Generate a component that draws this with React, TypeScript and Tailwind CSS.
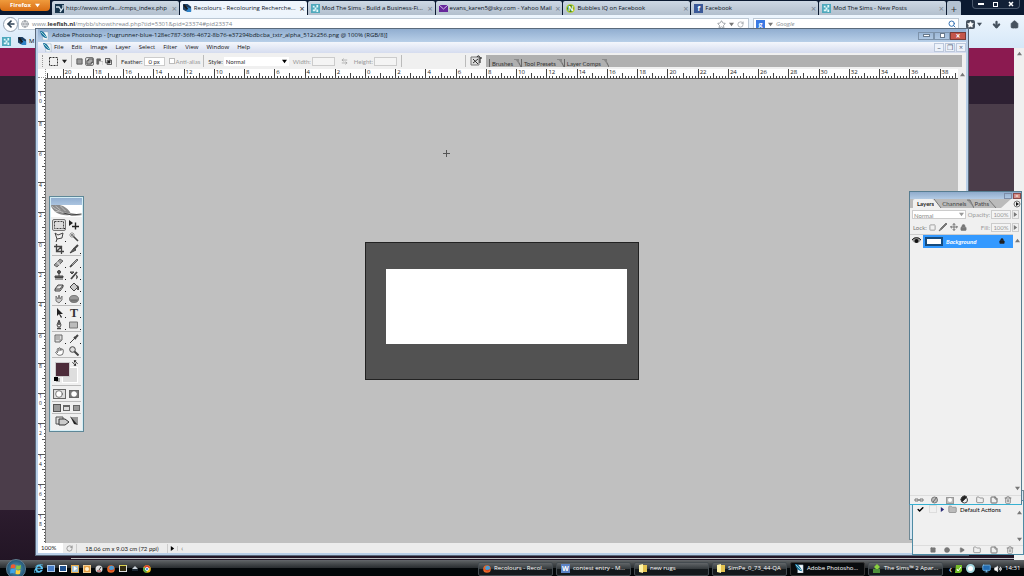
import type { ReactNode } from "react";
import {
  ArrowDown,
  ArrowLeft,
  ArrowLeftRight,
  Check,
  Circle,
  Folder,
  Globe,
  Hand,
  Home,
  Lock,
  Monitor,
  Move,
  Play,
  RotateCw,
  Search,
  Square,
  Star,
  StickyNote,
  Trash2,
  Volume2,
} from "lucide-react";
import { FaInternetExplorer } from "react-icons/fa";

const UNIT = 15.12;

function Leaf() {
  return (
    <svg viewBox="0 0 10 10" className="size-[9px] shrink-0">
      <path d="M3 1h6v9H3z" fill="#f4f8fa" stroke="#8aa0b0" strokeWidth="0.5" />
      <path d="M0 0c4 0 6 3 8 8C4 8 1 5 0 0z" fill="#1a6f9e" />
      <path d="M1 1l6 6" stroke="#a5e0cf" />
    </svg>
  );
}

function LeefishIcon() {
  return (
    <svg viewBox="0 0 10 10" className="size-[9px] shrink-0">
      <path d="M0 0h5l4 3v5H3L0 6z" fill="#1d3f63" />
      <path d="M4 3l5 2v4H4z" fill="#2f83c8" />
      <path d="M1 1l4 5" stroke="#1b1b1b" strokeWidth="2" />
    </svg>
  );
}

function SimsIcon() {
  return (
    <svg viewBox="0 0 10 10" className="size-[9px] shrink-0">
      <path d="M0 0h10v10H0z" fill="#4fa9bd" />
      <path d="M2 2h2v2H2zM6 1h2v3H6zM2 6h3v2H2zM6 6h2v3H6zM4 4h2v2H4z" fill="#e2f8fa" />
    </svg>
  );
}

function MailIcon() {
  return (
    <svg viewBox="0 0 9 7" className="h-[7px] w-[9px] shrink-0">
      <path d="M0 0h9v7H0z" fill="#67279b" />
      <path d="M0 0l4.500 4L9 0" fill="none" stroke="#d7bbea" />
    </svg>
  );
}

function SimfansIcon() {
  return (
    <svg viewBox="0 0 9 9" className="size-[9px] shrink-0">
      <path d="M0 0h9v9H0z" fill="#17344c" />
      <path d="M1 3h3l2 3M8 1v3L5 8" fill="none" stroke="#d3e3ee" strokeWidth="1.3" />
    </svg>
  );
}

function LetterIcon({ letter, className }: { letter: string; className: string }) {
  return <span className={`flex size-[9px] shrink-0 items-center justify-center text-[7px] font-bold leading-none text-white ${className}`}>{letter}</span>;
}

function FolderIcon() {
  return (
    <svg viewBox="0 0 8 9" className="h-[9px] w-2 shrink-0">
      <path d="M0 1l4-1v9l-4-1z" fill="#fff3a6" />
      <path d="M4 1h4v7H4z" fill="#e3c24f" />
    </svg>
  );
}

function FirefoxIcon() {
  return (
    <svg viewBox="0 0 10 10" className="size-2 shrink-0">
      <circle cx="5" cy="5" r="4.800" fill="#e8692a" />
      <circle cx="5.800" cy="4" r="3" fill="#4b9bd3" />
      <path d="M1 2c1 5 4 5 8 3-1 4-7 5-8-3z" fill="#d9461d" />
    </svg>
  );
}

function ChromeIcon() {
  return (
    <svg viewBox="0 0 10 10" className="size-2 shrink-0">
      <circle cx="5" cy="5" r="4.800" fill="#f2c31b" />
      <path d="M5 5L1 2.300A4.800 4.800 0 0 1 9.300 3z" fill="#dc3f30" />
      <path d="M5 5L.8 2.700A4.800 4.800 0 0 0 4.500 9.800z" fill="#4ba648" />
      <circle cx="5" cy="5" r="2" fill="#4a87dc" stroke="white" />
    </svg>
  );
}

function Arrow({ dir, className }: { dir: "up" | "down" | "right"; className?: string }) {
  const d = { up: "M0 5h6L3 1z", down: "M0 1h6L3 5z", right: "M1 0v6l4-3z" }[dir];
  return <svg viewBox="0 0 6 6" className={`size-[5px] shrink-0 ${className ?? "text-[#777]"}`}><path d={d} fill="currentColor" /></svg>;
}

const tabs = [
  { title: "http://www.simfa.../cmps_index.php", icon: <SimfansIcon /> },
  { title: "Recolours - Recolouring Recherche...", icon: <LeefishIcon />, active: true },
  { title: "Mod The Sims - Build a Business-Fi...", icon: <SimsIcon /> },
  { title: "evans_karen5@sky.com - Yahoo Mail", icon: <MailIcon /> },
  { title: "Bubbles IQ on Facebook", icon: <LetterIcon letter="N" className="rounded-full border border-[#c7e04a] bg-[#4b8a14]" /> },
  { title: "Facebook", icon: <LetterIcon letter="f" className="bg-[#3b5998]" /> },
  { title: "Mod The Sims - New Posts", icon: <SimsIcon /> },
];

function Browser() {
  return (
    <div className="flex min-h-0 flex-1 flex-col">
      {/* Tab strip */}
      <div className="flex h-[15px] items-end bg-[#0b1a31]">
        <button className="mr-[2px] flex h-[11px] w-[50px] shrink-0 items-center justify-center gap-1 self-start rounded-b-sm bg-linear-to-b from-[#ef9b3c] to-[#d96d10] text-[6px] font-bold text-white">
          Firefox <Arrow dir="down" className="text-white" />
        </button>
        <div className="flex min-w-0 flex-1">
          {tabs.map((t) => (
            <div
              key={t.title}
              className={`mr-px flex h-[14px] min-w-0 flex-1 items-center gap-[2px] rounded-t-xs pl-[3px] pr-[2px] text-[6px] font-medium text-[#0b121c] ${t.active ? "bg-[#eef5fc]" : "bg-linear-to-b from-[#cdd8e4] to-[#b2bfcd]"}`}
            >
              {t.icon}
              <span className="whitespace-nowrap">{t.title}</span>
              <button className={`ml-auto text-[9px] leading-none ${t.active ? "text-[#333]" : "text-[#76828f]"}`}>×</button>
            </div>
          ))}
        </div>
        <button className="flex h-[14px] w-[14px] shrink-0 items-center justify-center rounded-t-xs bg-[#b4c2d1] text-[11px] leading-none text-[#333]">+</button>
        <div className="ml-[11px] mr-1 flex h-[9px] w-[48px] shrink-0 items-center justify-around self-start rounded-b-sm border border-t-0 border-[#4a586c] bg-[#122036] text-white">
          <button className="h-[2px] w-[6px] bg-white" aria-label="Minimise" />
          <button className="size-[5px] border border-white" aria-label="Restore" />
          <button aria-label="Close"><svg viewBox="0 0 6 6" className="size-[6px]"><path d="M1 1l4 4M5 1L1 5" stroke="white" strokeWidth="1.500" /></svg></button>
        </div>
      </div>
      {/* Navigation */}
      <div className="h-[33px] bg-linear-to-b from-[#edf5fd] to-[#d6e8f8]">
        <div className="flex h-[18px] items-center">
          <button className="ml-[3px] flex size-[15px] shrink-0 items-center justify-center rounded-full border border-[#93a1b0] bg-white" aria-label="Back">
            <ArrowLeft className="size-[10px] text-[#2f4254]" strokeWidth={4} />
          </button>
          <div className="flex h-3 flex-1 items-center gap-[3px] border border-[#bcc8d4] bg-white pl-[2px] text-[6px] text-[#80878e]">
            <Globe className="size-2" />
            <span className="flex-1">
              www.<b className="text-[#333]">leefish.nl</b>/mybb/showthread.php?tid=5301&amp;pid=23374#pid23374
            </span>
            <Star className="size-[9px]" />
            <Arrow dir="down" />
            <RotateCw className="mr-1 size-[7px]" />
          </div>
          <div className="ml-1 flex h-3 w-[206px] items-center gap-[3px] border border-[#bcc8d4] bg-white px-[2px] text-[6px] italic text-[#80878e]">
            <LetterIcon letter="g" className="bg-[#3a79e3] not-italic" />
            <Arrow dir="down" />
            <span className="flex-1">Google</span>
            <Search className="size-2 text-[#3774b5]" strokeWidth={3} />
          </div>
          <div className="flex w-[65px] shrink-0 items-center justify-between pl-[7px] pr-[5px] text-[#46525f]">
            <button className="flex items-center gap-[2px]" aria-label="Bookmarks">
              <Star className="size-[9px] rounded-xs bg-[#46525f] p-px text-white" fill="white" />
              <Arrow dir="down" className="text-[#46525f]" />
            </button>
            <ArrowDown className="size-[9px]" strokeWidth={6} />
            <Home className="size-[9px]" fill="currentColor" />
          </div>
        </div>
        <div className="flex h-4 items-center gap-[7px] pl-[2px] text-[6px]">
          <SimsIcon />
          <span className="flex items-center gap-[2px]"><LeefishIcon />M</span>
        </div>
      </div>
      {/* Page */}
      <div className="flex min-h-0 flex-1">
        <div className="flex flex-1 flex-col">
          <div className="h-[28px] bg-[#8b1a50]" />
          <div className="h-[28px] bg-[#2d2032]" />
          <div className="flex-1 bg-[#4b3d4a]" />
          <div className="flex h-[50px] flex-col justify-end bg-linear-to-b from-[#2c1c2e] to-[#221525] pb-px pl-[71px]">
            <div className="h-px bg-[#b9bdc0]" />
          </div>
        </div>
        <div className="flex w-[10px] flex-col items-center bg-[#f0f0f0] pt-[3px]"><Arrow dir="up" /></div>
      </div>
    </div>
  );
}

function HorizontalRuler() {
  const start = 319;
  const ticks = Array.from({ length: 302 }, (_, i) => i - 106);
  return (
    <svg className="h-[9px] w-full bg-white" fontSize="6" fill="#222">
      {ticks.map((i) => {
        const x = start + (i * UNIT) / 5;
        const major = i % 10 === 0;
        return (
          <g key={i}>
            <path d={`M${Math.round(x) + 0.5} ${major ? 0 : i % 5 === 0 ? 4 : 7}V9`} stroke="#444" />
            {major && <text x={x + 2} y="5">{Math.abs(i / 5)}</text>}
          </g>
        );
      })}
    </svg>
  );
}

function VerticalRuler() {
  const start = 164;
  const ticks = Array.from({ length: 154 }, (_, i) => i - 54);
  return (
    <svg className="h-full w-2 shrink-0 bg-white" fontSize="5" fill="#222">
      {ticks.map((i) => {
        const y = start + (i * UNIT) / 5;
        const major = i % 10 === 0;
        return (
          <g key={i}>
            <path d={`M${major ? 0 : i % 5 === 0 ? 4 : 6} ${Math.round(y) + 0.5}H8`} stroke="#555" />
            {major &&
              String(Math.abs(i / 5)).split("").map((d, n) => (
                <text key={n} x="1" y={y + 5 + n * 7}>{d}</text>
              ))}
          </g>
        );
      })}
      <path d="M7.500 0V2000" stroke="#777" />
    </svg>
  );
}

function Field({ label, value, muted, className }: { label: string; value: string; muted?: boolean; className: string }) {
  return (
    <label className={`flex shrink-0 items-center gap-px ${muted ? "text-[#999]" : "text-[#333]"}`}>
      {label}
      <input defaultValue={value} disabled={muted} className={`h-[9px] border border-[#ccc] text-center ${muted ? "bg-[#f4f4f4]" : "bg-white"} ${className}`} />
    </label>
  );
}

function SelectionMode({ mode }: { mode: "new" | "add" | "subtract" | "intersect" }) {
  return (
    <svg viewBox="0 0 8 8" className="size-[7px]">
      {mode === "new" && <path d="M1 1h6v6H1z" fill="#999" stroke="#555" />}
      {mode === "add" && <path d="M1 3h2V1h5v4H6v2H1z" fill="#aaa" stroke="#444" />}
      {mode === "subtract" && <path d="M1 7V1h4v2H3v4z" fill="#666" stroke="#666" />}
      {mode === "subtract" && <path d="M4 4h4v4" fill="none" stroke="#bbb" />}
      {mode === "intersect" && <path d="M.5.5h5v5h-5zM2.500 2.500h5v5h-5z" fill="none" stroke="#444" />}
      {mode === "intersect" && <path d="M3 3h3v3H3z" fill="#222" />}
    </svg>
  );
}

const menus = ["File", "Edit", "Image", "Layer", "Select", "Filter", "View", "Window", "Help"];
const paletteTabs = ["Brushes", "Tool Presets", "Layer Comps"];

function Photoshop() {
  return (
    <div className="absolute bottom-5 left-[35px] right-[55px] top-[28px] flex flex-col border border-[#5a6a7c] bg-[#b9cfe8] px-[2px] pb-[2px]">
      {/* Title bar */}
      <div className="flex h-[13px] items-center gap-[3px] bg-linear-to-b from-[#91aed0] to-[#b8cfe8] pl-[2px] text-[6px] font-medium text-[#101a26]">
        <Leaf />
        <span className="flex-1 whitespace-nowrap">
          Adobe Photoshop - [rugrunner-blue-128ec787-36f6-4672-8b76-e37294bdbcba_txtr_alpha_512x256.png @ 100% (RGB/8)]
        </span>
        <div className="flex">
          <button className="flex h-[8px] w-[16px] items-center justify-center border border-[#7d93ab]" aria-label="Minimise"><i className="h-[3px] w-[7px] border border-[#68798c] bg-white" /></button>
          <button className="flex h-[8px] w-[16px] items-center justify-center border border-[#7d93ab]" aria-label="Maximise"><i className="size-[5px] border border-[#68798c] bg-white" /></button>
          <button className="flex h-[8px] w-[16px] items-center justify-center border border-[#7a3a35] bg-[#c4564a] text-[8px] font-bold leading-none text-white">×</button>
        </div>
      </div>
      {/* Menu bar */}
      <div className="flex h-[11px] items-center bg-linear-to-b from-[#f4f7fc] to-[#d5dcef] pl-[5px] text-[6px] font-medium text-[#111]">
        <Leaf />
        <div className="flex flex-1 gap-2 pl-[2px]">
          {menus.map((m) => <button key={m}>{m}</button>)}
        </div>
        <div className="flex gap-px text-[#52647a]">
          {["–", "❐", "×"].map((s) => <button key={s} className="flex h-[9px] w-[10px] items-center justify-center border border-[#bcc8dc] bg-[#edf2fa] text-[7px] leading-none">{s}</button>)}
        </div>
      </div>
      {/* Options bar */}
      <div className="flex h-4 items-center bg-[#f0f0f0] pl-1 font-['Lato','Open_Sans',sans-serif] text-[6px]">
        <div className="h-3 w-[7px] border-l border-dotted border-[#999]" />
        <svg viewBox="0 0 9 9" className="size-[9px]"><path d="M.5.5h8v8h-8z" fill="none" stroke="#333" strokeDasharray="2 1" /></svg>
        <Arrow dir="down" className="mx-1 text-[#222]" />
        <div className="flex h-3 items-center gap-[2px] border-l border-[#bbb] pl-1">
          <SelectionMode mode="new" />
          <span className="flex size-[9px] items-center justify-center rounded-xs border border-[#777] bg-[#ddd]"><SelectionMode mode="add" /></span>
          <SelectionMode mode="subtract" />
          <SelectionMode mode="intersect" />
        </div>
        <div className="ml-1 flex h-3 items-center gap-1 border-l border-[#bbb] pl-1">
          <Field label="Feather:" value="0 px" className="w-[21px]" />
          <label className="flex items-center gap-px text-[#999]"><input type="checkbox" disabled className="size-[6px] appearance-none border border-[#bbb] bg-white" />Anti-alias</label>
        </div>
        <div className="ml-[3px] flex h-3 items-center gap-1 border-l border-[#bbb] pl-1 text-[#333]">
          <label className="relative flex items-center gap-px">
            Style:
            <select className="h-[9px] w-[65px] appearance-none bg-white pl-[2px]"><option>Normal</option></select>
            <Arrow dir="down" className="pointer-events-none absolute right-[2px] text-black" />
          </label>
          <Field label="Width:" value="" muted className="w-[23px]" />
          <ArrowLeftRight className="mx-[2px] size-[7px] text-[#888]" />
          <Field label="Height:" value="" muted className="w-[23px]" />
        </div>
        <div className="ml-1 h-3 w-[65px] border-x border-[#bbb]" />
        <button className="mx-1 flex size-3 items-center justify-center" aria-label="File browser">
          <svg viewBox="0 0 12 12" className="size-3">
            <path d="M1 2h8v8H1z" fill="#ddd" stroke="#777" />
            <path d="M3 4l5 5M3 8l5-4" stroke="#333" />
            <path d="M7 2c1-2 3-1 3 1h2M10 3v5" fill="none" stroke="#111" />
          </svg>
        </button>
        <div className="mr-1 flex h-[12px] flex-1 items-end bg-[#b0b0b0] pl-[3px]">
          {paletteTabs.map((t) => (
            <button key={t} className="flex h-2 items-center border-l border-[#666] pl-[2px] text-[#333]">
              {t}
              <svg viewBox="0 0 8 8" className="size-2"><path d="M1 0h3l4 8" fill="none" stroke="#666" /><path d="M2 0h4v5z" fill="#888" /></svg>
            </button>
          ))}
        </div>
      </div>
      {/* Document */}
      <div className="flex min-h-0 flex-1 bg-[#f0f0f0]">
        <div className="flex min-w-0 flex-1 flex-col">
          <div className="flex h-[9px] bg-white"><div className="w-2 shrink-0 border-b border-r border-dotted border-[#999]" /><HorizontalRuler /></div>
          <div className="flex min-h-0 flex-1">
            <VerticalRuler />
            <div className="relative flex flex-1 items-center justify-center border-t border-[#555] bg-[#c0c0c0]">
              <svg viewBox="0 0 7 7" className="absolute left-[397px] top-[71px] size-[7px]"><path d="M3.500 0v7M0 3.500h7" stroke="#555" /></svg>
              <div className="h-[138px] w-[274px] border border-[#222] bg-[#525252] pl-5 pt-[26px]">
                <div className="h-[75px] w-[241px] bg-white" />
              </div>
            </div>
          </div>
        </div>
        <div className="flex w-2 flex-col items-center bg-[#f0f0f0] pt-[3px]"><Arrow dir="up" /></div>
      </div>
      {/* Status bar */}
      <div className="flex h-[10px] items-center bg-[#ececec] font-['Lato','Open_Sans',sans-serif] text-[6px] text-[#222]">
        <div className="h-full w-[25px] bg-white pl-[3px] leading-[10px]">100%</div>
        <RotateCw className="mx-[3px] size-[7px] text-[#666]" />
        <span className="w-[92px] border-x border-[#ccc] text-center">18.06 cm x 9.03 cm (72 ppi)</span>
        <span className="border-r border-[#ccc] px-[2px]"><Arrow dir="right" className="text-black" /></span>
        <span className="pl-[3px] text-[8px] text-[#777]">‹</span>
      </div>
    </div>
  );
}

function Tool({ children }: { children: ReactNode }) {
  return <svg viewBox="0 0 10 10" className="size-[10px]" fill="none" stroke="#444">{children}</svg>;
}

const toolGroups: { name: string; icon: ReactNode }[][] = [
  [
    { name: "Marquee", icon: <Tool><path d="M.5 1.500h9v7h-9z" strokeDasharray="2 1" /></Tool> },
    { name: "Move", icon: <Tool><path d="M0 0v6l4-3z" fill="#222" stroke="none" /><path d="M6.500 2.500v7M3 6.500h7" stroke="#222" strokeWidth="1.400" /></Tool> },
    { name: "Lasso", icon: <Tool><path d="M1 1l3 2 5-2-1 5-5 1zM3 7l-1 3" /></Tool> },
    { name: "Magic wand", icon: <Tool><path d="M4 4l5 5" strokeWidth="1.600" /><path d="M3 0v6M0 3h6M1 1l4 4M5 1L1 5" stroke="#777" strokeWidth="0.700" /></Tool> },
    { name: "Crop", icon: <Tool><path d="M2.500 0v7.500H10M0 2.500h7.500V10M8 2L3 7" strokeWidth="1.300" /></Tool> },
    { name: "Slice", icon: <Tool><path d="M1 9l4-5 2 2z" fill="#666" /><path d="M5 5l4-4" strokeWidth="2" /></Tool> },
  ],
  [
    { name: "Healing brush", icon: <Tool><path d="M0 7l6-6 3 2-6 6z" fill="#999" stroke="#666" /><path d="M3 4l3 3" strokeWidth="2" stroke="#ccc" /></Tool> },
    { name: "Brush", icon: <Tool><path d="M1 9l2-3 5-5 1 1-5 5z" fill="#aaa" stroke="#666" /><path d="M1 9l2-2" strokeWidth="1.500" /></Tool> },
    { name: "Clone stamp", icon: <Tool><circle cx="5" cy="2" r="1.500" fill="#555" /><path d="M5 3v3M1 6h8v1.500H1z" fill="#666" /><path d="M1 9h8" /></Tool> },
    { name: "History brush", icon: <Tool><path d="M2 9l6-7" strokeWidth="1.800" /><path d="M1 2h4L3 4zM7 5c2 1 2 3 0 4" fill="#777" /></Tool> },
    { name: "Eraser", icon: <Tool><path d="M1 7l3-4h5L6 7zM1 7v2h5l3-4V3" fill="#ccc" /></Tool> },
    { name: "Paint bucket", icon: <Tool><path d="M1 5l4-4 4 4-4 4z" fill="#ccc" /><path d="M8 4c2 1 1 3 1 4" strokeWidth="1.800" /></Tool> },
    { name: "Smudge", icon: <Tool><path d="M2 2l2 3 1-4 1 4 2-3v4L5 9 2 7z" fill="#ccc" stroke="#777" /></Tool> },
    { name: "Sponge", icon: <Tool><ellipse cx="5" cy="5" rx="4.500" ry="3.500" fill="#999" stroke="#777" /><path d="M1 6h8M2 7h6" stroke="#555" strokeWidth="0.700" /></Tool> },
  ],
  [
    { name: "Path selection", icon: <Tool><path d="M3 0v8l2-2 2 4 1-1-2-3h3z" fill="#222" stroke="none" /></Tool> },
    { name: "Type", icon: <span className="font-['Liberation_Serif',serif] text-[12px] font-bold leading-[10px] text-[#333]">T</span> },
    { name: "Pen", icon: <Tool><path d="M5 0L3 5l1 2h2l1-2z" fill="#eee" /><path d="M5 1v4M3 8.500h4" strokeWidth="1.600" /></Tool> },
    { name: "Rectangle", icon: <Tool><path d="M.5 2h8v6h-8z" fill="#bbb" stroke="#777" /></Tool> },
  ],
  [
    { name: "Notes", icon: <Tool><path d="M1 1h7v5L6 8H1z" fill="#ddd" stroke="#666" /><path d="M6 8V6h2M2 3h4M2 5h4" stroke="#888" /></Tool> },
    { name: "Eyedropper", icon: <Tool><path d="M1 9l5-5" /><path d="M5 3l2 2M6 4l3-3" strokeWidth="2" /></Tool> },
    { name: "Hand", icon: <Hand className="size-[9px]" fill="white" /> },
    { name: "Zoom", icon: <Tool><circle cx="3.500" cy="3.500" r="2.800" fill="#ddd" /><path d="M5.500 5.500l4 4" strokeWidth="2" /></Tool> },
  ],
];
const singleTools = ["Move", "Magic wand", "Crop", "Hand", "Zoom"];

function Toolbox() {
  return (
    <div className="absolute left-[49px] top-[196px] w-[35px] border border-[#5e8797] bg-[#f0f0f0] text-[#444] outline-1 -outline-offset-2 outline-[#d3edf5]">
      <div className="h-2 bg-linear-to-b from-[#8eabcd] to-[#aac4e0]" />
      <svg viewBox="0 0 32 12" className="h-3 w-full bg-white">
        <path d="M0 0h9c5 1 9 4 11 8 4 1 8 1 12 2-5 1-9 1-13 0C10 11 3 8 0 0z" fill="#8a8a8a" />
        <path d="M1 1c5 4 10 7 19 8M5 1l5 4M10 1l5 5M4 7l5-1" stroke="#ddd" fill="none" strokeWidth="0.600" />
        <path d="M13 8l8 2 10-1" stroke="#444" fill="none" />
      </svg>
      <div className="px-[2px] pb-[3px] pt-[2px]">
        {toolGroups.map((group, g) => (
          <div key={g} className="mb-px grid grid-cols-2 gap-x-px border-b border-[#bbb]">
            {group.map((tool) => (
              <button key={tool.name} aria-label={tool.name} className={`relative flex h-[12px] items-center justify-center ${tool.name === "Marquee" ? "rounded-xs border border-[#777] bg-[#ddd]" : ""}`}>
                {tool.icon}
                {!singleTools.includes(tool.name) && <i className="absolute bottom-px right-0 size-px bg-[#222]" />}
              </button>
            ))}
          </div>
        ))}
        {/* Foreground and background colours */}
        <div className="relative h-[27px] border-b border-[#bbb]">
          <div className="absolute left-[10px] top-2 size-[16px] border border-white bg-[#dedede]" />
          <div className="absolute left-[3px] top-[3px] size-[15px] border border-[#ccc] bg-[#4d2c3a]" />
          <ArrowLeftRight className="absolute right-[3px] top-px size-[6px] rotate-45 text-black" strokeWidth={3} />
          <i className="absolute bottom-[3px] left-[4px] size-[4px] bg-[#aaa]" />
          <i className="absolute bottom-[4px] left-[2px] size-[4px] bg-black" />
        </div>
        <div className="grid h-[16px] grid-cols-2 items-center border-b border-[#bbb]">
          <button aria-label="Standard mode" className="mx-px flex h-[10px] items-center justify-center border border-[#666] bg-[#ddd]"><Circle className="size-[8px]" fill="white" /></button>
          <button aria-label="Quick mask mode" className="mx-[2px] flex h-2 items-center justify-center border border-[#666] bg-[#777]"><Circle className="size-[6px] text-white" fill="white" /></button>
        </div>
        <div className="grid h-[12px] grid-cols-3 items-center justify-items-center border-b border-[#bbb]">
          <i className="size-2 border border-[#555] bg-[#999]" />
          <i className="h-[6px] w-[7px] border border-t-2 border-[#666] bg-[#ddd]" />
          <i className="h-[6px] w-[7px] border border-[#666] bg-[#999]" />
        </div>
        <div className="flex h-[14px] items-center justify-center">
          <svg viewBox="0 0 24 10" className="h-[10px] w-6">
            <path d="M1 1h7v7H1z" fill="#ddd" stroke="#555" />
            <path d="M4 3h6l4 3-4 3H4z" fill="#ccc" stroke="#333" />
            <path d="M15 1h8v8z" fill="#999" />
            <path d="M15 0l8 9-4-1z" fill="#222" />
          </svg>
        </div>
      </div>
    </div>
  );
}

function FooterIcons() {
  return (
    <>
      <Folder className="size-2" />
      <StickyNote className="size-2" strokeWidth={3} />
      <Trash2 className="size-2" />
    </>
  );
}

function ActionsPanel() {
  return (
    <>
      <div className="absolute right-0 top-[490px] h-[50px] w-[115px] border border-[#6f8894] bg-[#d7e6f2]" />
      <div className="absolute right-0 top-[500px] flex h-[55px] w-[112px] flex-col border border-[#4e8ba4] bg-[#f0f0f0] pt-1 text-[6px]">
        <div className="flex flex-1">
          <div className="flex h-2 flex-1 items-center">
            <Check className="mx-1 size-[7px] text-black" strokeWidth={5} />
            <span className="mx-px size-2 border border-[#ddd]" />
            <Arrow dir="right" className="ml-[2px] text-[#2b2b77]" />
            <Folder className="mx-[3px] size-[9px] text-[#888]" fill="#bbb" />
            Default Actions
          </div>
          <div className="flex w-2 flex-col items-center justify-between pb-[3px] pt-[5px]"><Arrow dir="up" /><Arrow dir="down" /></div>
        </div>
        <div className="flex h-[9px] items-center justify-between border-t border-[#ddd] pl-[17px] pr-[9px] text-[#777]">
          <Square className="size-[6px]" fill="currentColor" />
          <Circle className="size-[6px]" fill="currentColor" />
          <Play className="size-[6px]" fill="currentColor" />
          <FooterIcons />
        </div>
      </div>
    </>
  );
}

function LayersPanel() {
  return (
    <div className="absolute right-[2px] top-[191px] flex h-[314px] w-[113px] flex-col border border-[#577d91] border-b-[#37b1d2] bg-[#f0f0f0] text-[6px] text-[#888]">
      <div className="flex h-[7px] items-center justify-end gap-px bg-linear-to-b from-[#8fabcc] to-[#b3cbe4]">
        <button className="h-[6px] w-2 border border-[#7d8da8]" aria-label="Minimise" />
        <button className="flex h-[6px] w-2 items-center justify-center border border-[#8b4a4a] bg-[#d28b85] text-[6px] leading-none text-white">×</button>
      </div>
      <div className="flex h-[9px] items-center bg-[#bbb] text-[#444]">
        <button className="ml-[3px] h-full rounded-t-xs bg-[#f0f0f0] pl-1 font-bold text-[#222]">Layers</button>
        <svg viewBox="0 0 8 9" className="h-[9px] w-2"><path d="M0 0l7 9H0z" fill="#f0f0f0" /><path d="M0 0l7 9" stroke="#777" /></svg>
        <button>Channels</button>
        <svg viewBox="0 0 8 9" className="h-[9px] w-2"><path d="M1 1h3l4 8" fill="#999" stroke="#777" /></svg>
        <button>Paths</button>
        <svg viewBox="0 0 8 9" className="h-[9px] w-2"><path d="M0 1l7 8" stroke="#777" /></svg>
        <svg viewBox="0 0 20 9" className="ml-auto h-[9px] w-5">
          <path d="M0 9L10 0h10v9z" fill="#f0f0f0" />
          <circle cx="16" cy="5" r="3" fill="#eee" stroke="#777" />
          <path d="M15 3v4l3-2z" fill="#111" />
        </svg>
      </div>
      <div className="flex h-3 items-center gap-px pl-[2px] pr-[2px]">
        <div className="relative flex items-center">
          <select className="h-[9px] w-[54px] appearance-none border border-[#ccc] bg-white px-px" aria-label="Blend mode"><option>Normal</option></select>
          <Arrow dir="down" className="pointer-events-none absolute right-[2px] text-[#999]" />
        </div>
        <div className="flex flex-1 justify-end"><Field label="Opacity:" value="100%" muted className="w-5" /></div>
        <span className="flex h-[9px] w-[7px] items-center justify-center border border-[#ccc]"><Arrow dir="right" /></span>
      </div>
      <div className="flex h-[14px] items-center gap-px pl-[3px] pr-[2px] text-[#777]">
        <div className="flex items-center gap-[2px]">
          Lock:
          <Square className="size-[7px]" strokeDasharray="3 2" />
          <Tool><path d="M1 9l2-3 5-5 1 1-5 5z" fill="#777" stroke="#777" /></Tool>
          <Move className="size-2" strokeWidth={3} />
          <Lock className="size-[7px]" fill="currentColor" />
        </div>
        <div className="flex flex-1 justify-end"><Field label="Fill:" value="100%" muted className="w-5" /></div>
        <span className="flex h-[9px] w-[7px] items-center justify-center border border-[#ccc]"><Arrow dir="right" /></span>
      </div>
      <div className="flex flex-1">
        <div className="flex h-[13px] flex-1 items-center border-t border-[#ccc]">
          <svg viewBox="0 0 9 8" className="mx-[2px] h-2 w-[9px]">
            <path d="M0 3c2-4 7-4 9 0-2 4-7 4-9 0z" fill="#999" />
            <path d="M0 3c2-3 7-3 9 0" fill="none" stroke="#222" />
            <circle cx="4.500" cy="4" r="2" fill="#111" />
          </svg>
          <div className="flex h-[13px] flex-1 items-center gap-[3px] bg-[#3399ff] pl-[2px] pr-[8px] font-bold italic text-white">
            <span className="h-[9px] w-[18px] border-2 border-[#164b7d] bg-white" />
            <span className="flex-1">Background</span>
            <Lock className="size-[6px] text-[#222]" fill="currentColor" />
          </div>
        </div>
        <div className="flex w-2 flex-col items-center justify-between py-1"><Arrow dir="up" /><Arrow dir="down" /></div>
      </div>
      <div className="flex h-[9px] items-center justify-between border-t border-[#ddd] pl-1 pr-[9px] text-[#666]">
        <svg viewBox="0 0 10 4" className="h-1 w-[10px]"><path d="M1 1h3v2H1zM6 1h3v2H6zM4 2h2" fill="none" stroke="#777" /></svg>
        <Tool><circle cx="4.500" cy="5" r="3" fill="#bbb" stroke="#777" /><path d="M3 7l4-5" stroke="#666" /></Tool>
        <span className="flex h-[7px] w-2 items-center justify-center border border-[#999] bg-[#bbb]"><i className="size-[4px] rounded-full bg-white" /></span>
        <Tool><circle cx="4.500" cy="5" r="3" fill="#eee" /><path d="M2 7a3.500 3.500 0 0 1 5-5z" fill="#222" /></Tool>
        <FooterIcons />
      </div>
    </div>
  );
}

const tasks = [
  { title: "Recolours - Recol...", icon: <FirefoxIcon /> },
  { title: "contest entry - M...", icon: <LetterIcon letter="W" className="bg-[#5b82c4]" /> },
  { title: "new rugs", icon: <FolderIcon /> },
  { title: "SimPe_0_73_44-QA", icon: <FolderIcon /> },
  { title: "Adobe Photosho...", icon: <Leaf />, active: true },
  { title: "The Sims™ 2 Apar...", icon: <svg viewBox="0 0 8 9" className="h-[9px] w-2 shrink-0"><path d="M4 0l3 3-3 3-3-3z" fill="#8ad13f" /><path d="M0 5h7v4H0z" fill="#4d8f3a" /></svg> },
];

function Taskbar() {
  return (
    <div className="relative flex h-4 shrink-0 items-center border-t border-[#606468] bg-linear-to-b from-[#5b5f61] from-0% via-[#25292c] via-50% to-[#020608] to-50% text-white">
      <button className="ml-[6px] flex size-[20px] shrink-0 items-center justify-center rounded-full border border-[#607f92] bg-radial from-[#5ba4c6] to-[#123a58]" aria-label="Start">
        <svg viewBox="0 0 12 12" className="size-3">
          <path d="M1 2q2-1.500 4.500 0L5 5.500q-2-1-4.500 0z" fill="#ef5b32" />
          <path d="M6.500 2q2 1.500 4.500 0l-.5 4q-2 1-4.500 0z" fill="#8cc63f" />
          <path d="M.5 6.500q2-1.500 4.500 0L4.500 10.500q-2-1-4.500 0z" fill="#3fa4e8" />
          <path d="M6 6.800q2 1.500 4.500 0L10 10.700q-2 1-4.500 0z" fill="#ffd13b" />
        </svg>
      </button>
      <div className="flex items-center gap-1 pl-2">
        <FaInternetExplorer className="size-[9px] text-[#5cc1ef]" />
        <i className="h-[7px] w-2 border border-[#a9c8ec] bg-[#477cc4]" />
        <i className="h-[7px] w-2 border border-white bg-[#20518f]" />
        <i className="flex size-2 items-center justify-center border border-[#e7ad4f] bg-[#a5c6d8]"><Arrow dir="right" className="text-white" /></i>
        <i className="flex size-2 items-center justify-center border border-[#f2cf96] bg-[#e5a046]"><i className="size-[4px] rounded-full bg-[#fff0ce]" /></i>
        <svg viewBox="0 0 8 8" className="size-2"><circle cx="4" cy="4" r="3.500" fill="#ddd" /><path d="M4 5l2-3" stroke="#333" /><path d="M2 6h4" stroke="#b12b2b" /></svg>
        <FirefoxIcon />
        <i className="h-[7px] w-2 border border-[#ddd] border-t-[#d9cf4a] bg-[#342d12]" />
        <svg viewBox="0 0 8 8" className="size-2"><path d="M1 4l3-3 3 3z" fill="#c9d1d8" /><path d="M1 5h6" stroke="#33465a" /></svg>
        <ChromeIcon />
      </div>
      <div className="ml-auto flex gap-[3px]">
        {tasks.map((t) => (
          <button
            key={t.title}
            className={`flex h-[14px] w-[75px] items-center gap-[3px] rounded-xs border px-1 text-[6px] font-medium ${t.active ? "border-[#333] bg-[#090c0e]" : "border-[#444b50] bg-linear-to-b from-[#626669] from-0% via-[#34393c] via-50% to-[#14191c] to-50%"}`}
          >
            {t.icon}
            <span className="whitespace-nowrap">{t.title}</span>
          </button>
        ))}
      </div>
      <div className="flex w-[81px] shrink-0 items-center gap-[3px] pl-[6px] text-[6px] font-medium">
        <span className="text-[10px] leading-none">‹</span>
        <svg viewBox="0 0 8 8" className="size-2"><path d="M1 0h6v6L5 8H0z" fill="#76bd29" /><path d="M2 4l1 2 3-4" fill="none" stroke="white" /></svg>
        <i className="flex size-[9px] items-center justify-center rounded-full border-2 border-[#a4d8df] bg-white" />
        <Monitor className="ml-1 size-[9px] text-[#76bff3]" fill="#246cb0" />
        <Volume2 className="size-[8px]" fill="white" />
        <span>14:31</span>
      </div>
    </div>
  );
}

export default function App() {
  return (
    <div className="relative flex h-screen w-full select-none flex-col overflow-hidden bg-[#221525] font-['Open_Sans',sans-serif] leading-[9px]">
      <Browser />
      <Photoshop />
      <Toolbox />
      <div className="font-['Lato','Open_Sans',sans-serif]">
        <ActionsPanel />
        <LayersPanel />
      </div>
      <Taskbar />
    </div>
  );
}
